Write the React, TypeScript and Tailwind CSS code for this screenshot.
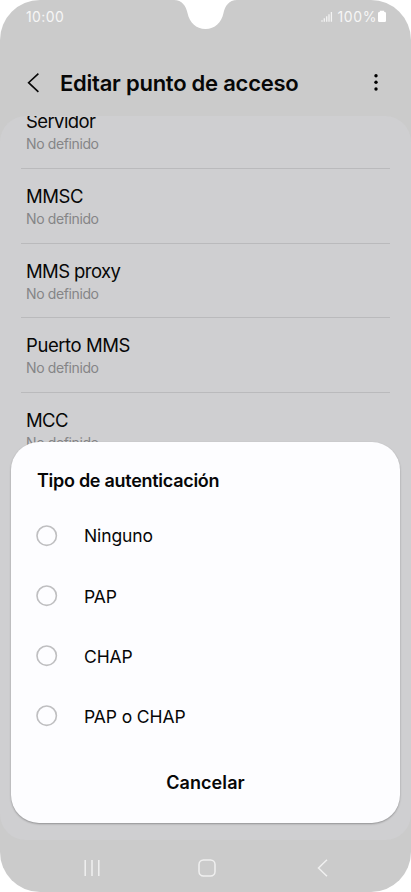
import { useState } from 'react'

const settings = [
  { label: 'Servidor', tracking: 'tracking-[-0.6px]' },
  { label: 'MMSC', tracking: 'tracking-[-0.45px]' },
  { label: 'MMS proxy', tracking: 'tracking-[-0.6px]' },
  { label: 'Puerto MMS', tracking: 'tracking-[-0.42px]' },
  { label: 'MCC', tracking: 'tracking-[-0.6px]' },
]

const options = ['Ninguno', 'PAP', 'CHAP', 'PAP o CHAP']

function StatusBar() {
  return (
    <div className="flex h-[33px] items-center justify-between pl-[26px] pr-[24px] text-[14px] text-[#f6f6f6]">
      <span className="tracking-[0.4px]">10:00</span>
      <div className="flex items-center">
        <svg width="12" height="12" viewBox="0 0 12 12" className="mr-[4px]">
          <path
            d="M1 9.2v1.6M3.3 7.2v3.6M5.7 5.3v5.5M8 3.3v7.5M10.4 1v9.8"
            stroke="#f3f3f3"
            strokeWidth="1.3"
          />
        </svg>
        <span className="tracking-[0.6px]">100%</span>
        <svg width="10" height="13" viewBox="0 0 10 13">
          <path d="M2.8 .7h4.4v1.2h.5q1.3 0 1.3 1.3v7.6q0 1.3-1.3 1.3H2.3Q1 12.1 1 10.8V3.2Q1 1.9 2.3 1.9h.5z" fill="#fff" />
        </svg>
      </div>
    </div>
  )
}

function Header() {
  return (
    <header className="flex h-[83px] items-center pl-[26px] pr-[32px] pt-[16px]">
      <svg width="15" height="22" viewBox="0 0 15 22" className="shrink-0">
        <path d="M12.4 1.6 2.6 10.7l9.8 9.1" fill="none" stroke="#080808" strokeWidth="1.6" />
      </svg>
      <h1 className="ml-[19px] whitespace-nowrap text-[22px] font-semibold leading-7 tracking-[-0.24px]">
        Editar punto de acceso
      </h1>
      <svg width="6" height="20" viewBox="0 0 6 20" className="ml-auto shrink-0">
        <circle cx="3" cy="2.7" r="1.7" />
        <circle cx="3" cy="9.3" r="1.7" />
        <circle cx="3" cy="16" r="1.7" />
      </svg>
    </header>
  )
}

function SettingsList() {
  return (
    <main className="h-[724px] overflow-hidden rounded-[26px] bg-[#cfcfd1]">
      <ul className="-mt-[22px] px-[21px]">
        {settings.map(({ label, tracking }) => (
          <li key={label} className="h-[74.75px] border-b border-[#bababc] pl-[5px] pt-[15px]">
            <div className={`text-[18.5px] leading-6 ${tracking}`}>{label}</div>
            <div className="pt-px text-[14px] leading-5 tracking-[-0.38px] text-[#858587]">No definido</div>
          </li>
        ))}
      </ul>
    </main>
  )
}

function NavigationBar() {
  return (
    <nav className="flex h-[52px] items-center pl-[82px] pt-[4px]">
      <svg width="20" height="20" viewBox="0 0 20 20">
        <path d="M3.2 2v16M10 2v16M16.8 2v16" stroke="#f0f0f0" strokeWidth="1.5" />
      </svg>
      <svg width="20" height="20" viewBox="0 0 20 20" className="ml-[95px]">
        <rect x="2" y="2" width="16" height="16" rx="4.5" fill="none" stroke="#f0f0f0" strokeWidth="1.5" />
      </svg>
      <svg width="16" height="20" viewBox="0 0 16 20" className="ml-[98px]">
        <path d="M12 1.8 3.5 10l8.5 8.2" fill="none" stroke="#f0f0f0" strokeWidth="1.5" />
      </svg>
    </nav>
  )
}

function AuthDialog() {
  const [selected, setSelected] = useState('')

  return (
    <section className="absolute left-[11px] top-[441.5px] h-[381.5px] w-[389px] rounded-[28px] bg-[#fdfdff] pt-[26px] shadow-[0_1px_2px_rgba(0,0,0,0.3)]">
      <h2 className="pl-[26px] text-[18px] font-semibold leading-[26px] tracking-[-0.28px]">Tipo de autenticación</h2>
      <div className="mt-[12px]">
        {options.map(option => (
          <button
            key={option}
            className="flex h-[60.2px] w-full items-center pl-[25px] text-left"
            onClick={() => setSelected(option)}
          >
            <svg width="22" height="22" viewBox="0 0 22 22">
              <circle cx="10.7" cy="10.7" r="9.7" fill="none" stroke="#bfbfc1" strokeWidth="1.6" />
              {selected === option && <circle cx="10.7" cy="10.7" r="5" fill="#3e7bea" />}
            </svg>
            <span className="ml-[26px] pt-[2px] text-[17.5px] tracking-[-0.1px]">{option}</span>
          </button>
        ))}
      </div>
      <button className="mt-[22px] h-[28px] w-full text-[18px] font-semibold tracking-[0.1px]">Cancelar</button>
    </section>
  )
}

export default function App() {
  return (
    <div className="h-[892px] w-[411px] overflow-hidden bg-white font-['Inter',sans-serif] text-[#070707]">
      <div className="relative h-full overflow-hidden rounded-[40px] bg-[#cbcbcb]">
        <StatusBar />
        <Header />
        <SettingsList />
        <NavigationBar />
        {/* Camera notch */}
        <svg width="70" height="30" viewBox="0 0 70 30" className="absolute left-[171px] top-0">
          <path d="M3 0C11 0 15 6 16.5 13C18.5 22.5 25 29 34.5 29S50.5 22.5 52.5 13C54 6 58 0 66 0Z" fill="#fff" />
        </svg>
        <AuthDialog />
      </div>
    </div>
  )
}
